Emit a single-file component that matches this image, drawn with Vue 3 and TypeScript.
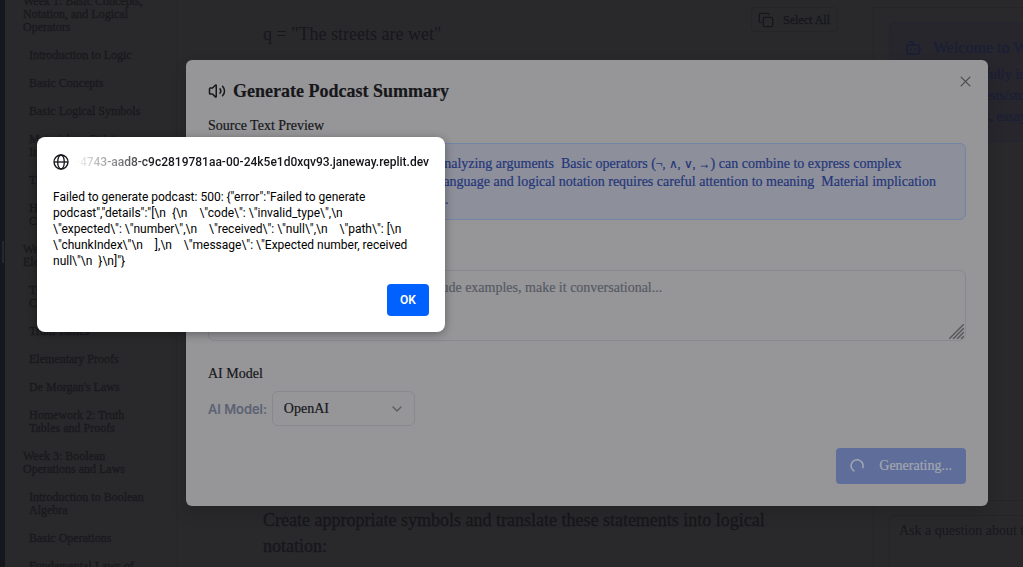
<script setup lang="ts">
import { ref } from 'vue'

interface NavEntry {
  text: string
  week?: boolean
}

const nav: NavEntry[] = [
  { text: 'Week 1: Basic Concepts,\nNotation, and Logical\nOperators', week: true },
  { text: 'Introduction to Logic' },
  { text: 'Basic Concepts' },
  { text: 'Basic Logical Symbols' },
  { text: 'Material vs. Strict\nImplication' },
  { text: 'Translation' },
  { text: 'Homework 1:\nConcepts' },
  { text: 'Week 2:\nElementary Proofs', week: true },
  { text: 'Truth-Functional\nConnectives' },
  { text: 'Truth Tables' },
  { text: 'Elementary Proofs' },
  { text: "De Morgan's Laws" },
  { text: 'Homework 2: Truth\nTables and Proofs' },
  { text: 'Week 3: Boolean\nOperations and Laws', week: true },
  { text: 'Introduction to Boolean\nAlgebra' },
  { text: 'Basic Operations' },
  { text: 'Fundamental Laws of\nBoolean Algebra' },
]

const model = ref('OpenAI')
const instructions = ref('')
const question = ref('')

const previewStart = 'Logic provides useful formal tools for analyzing arguments  Basic operators ('
const previewEnd =
  ') can combine to express complex\n' +
  'ideas  Translating between any natural language and logical notation requires careful attention to meaning  Material implication\n' +
  'differs from strict implication in models.'

const errorText =
  'Failed to generate podcast: 500: {"error":"Failed to generate\n' +
  'podcast","details":"[\\n  {\\n    \\"code\\": \\"invalid_type\\",\\n\n' +
  '\\"expected\\": \\"number\\",\\n    \\"received\\": \\"null\\",\\n    \\"path\\": [\\n\n' +
  '\\"chunkIndex\\"\\n    ],\\n    \\"message\\": \\"Expected number, received\n' +
  'null\\"\\n  }\\n]"}'
</script>

<template>
  <div class="page">
    <div class="workspace">
      <div class="rail"><span class="grip"></span></div>
      <nav class="sidebar">
        <a v-for="item in nav" :key="item.text" href="#" :class="{ week: item.week }">{{ item.text }}</a>
      </nav>
      <main class="lesson">
        <div class="lesson-top">
          <p>q = "The streets are wet"</p>
          <button type="button" class="select-all">
            <svg width="16" height="16" viewBox="0 0 24 24" fill="none" stroke="currentColor" stroke-width="2" stroke-linecap="round" stroke-linejoin="round">
              <rect x="8" y="8" width="14" height="14" rx="2" />
              <path d="M4 16c-1.100 0-2-.9-2-2V4c0-1.100.9-2 2-2h10c1.100 0 2 .9 2 2" />
            </svg>
            Select All
          </button>
        </div>
        <p class="exercise">Create appropriate symbols and translate these statements into logical notation:</p>
      </main>
      <aside class="chat">
        <section class="welcome">
          <h2>
            <svg width="18" height="18" viewBox="0 0 24 24" fill="none" stroke="currentColor" stroke-width="2" stroke-linecap="round" stroke-linejoin="round">
              <path d="M12 8V4H8M2 14h2M20 14h2M15 13v2M9 13v2" />
              <rect x="4" y="8" width="16" height="12" rx="2" />
            </svg>
            Welcome to Week
          </h2>
          <p>This course is fully interactive</p>
          <p>You can take tests/study</p>
          <p>guides, quizzes, essays</p>
        </section>
        <div class="ask">
          <textarea v-model="question" aria-label="Question" placeholder="Ask a question about the"></textarea>
        </div>
      </aside>
    </div>

    <div class="overlay">
      <section class="modal" role="dialog" aria-labelledby="modal-title">
        <header>
          <svg width="18" height="18" viewBox="0 0 24 24" fill="none" stroke="currentColor" stroke-width="2" stroke-linecap="round" stroke-linejoin="round">
            <path d="M11 4.700a.7.7 0 0 0-1.200-.5L6.400 7.600A1.400 1.400 0 0 1 5.400 8H3a1 1 0 0 0-1 1v6a1 1 0 0 0 1 1h2.400a1.400 1.400 0 0 1 1 .4l3.400 3.400a.7.7 0 0 0 1.200-.5zM16 9a5 5 0 0 1 0 6M19.400 18.400a9 9 0 0 0 0-12.700" />
          </svg>
          <h1 id="modal-title">Generate Podcast Summary</h1>
          <button type="button" class="close" aria-label="Close">
            <svg width="15" height="15" viewBox="0 0 24 24" fill="none" stroke="currentColor" stroke-width="2" stroke-linecap="round">
              <path d="M19 5 5 19M5 5l14 14" />
            </svg>
          </button>
        </header>
        <h3>Source Text Preview</h3>
        <div class="preview">{{ previewStart }}<span class="operators">¬, ∧, ∨, →</span>{{ previewEnd }}</div>
        <label class="heading instructions-label" for="instructions">Custom Instructions (Optional)</label>
        <div class="area">
          <textarea id="instructions" v-model="instructions" placeholder="e.g., Focus on all the key concepts, include examples, make it conversational..."></textarea>
          <svg class="resize" width="15" height="15" viewBox="0 0 15 15" stroke="currentColor" stroke-width="1.500">
            <path d="M0 15 15 0M4 15 15 4M8 15l7-7M12 15l3-3" />
          </svg>
        </div>
        <h3>AI Model</h3>
        <div class="model-row">
          <label for="model">AI Model:</label>
          <span class="picker">
            <select id="model" v-model="model">
              <option>OpenAI</option>
              <option>Anthropic</option>
            </select>
            <svg width="16" height="16" viewBox="0 0 24 24" fill="none" stroke="currentColor" stroke-width="2" stroke-linecap="round" stroke-linejoin="round">
              <path d="m6 9 6 6 6-6" />
            </svg>
          </span>
        </div>
        <footer>
          <button type="button" class="generate" disabled>
            <svg width="14" height="14" viewBox="0 0 14 14" fill="none" stroke="currentColor" stroke-width="1.500">
              <path d="M4.500 12.200A6 6 0 1 1 12.600 9.200" />
            </svg>
            Generating...
          </button>
        </footer>
      </section>
    </div>

    <section class="alert" role="alertdialog" aria-labelledby="origin">
      <div class="origin">
        <svg width="16" height="16" viewBox="0 0 16 16" fill="none" stroke="currentColor" stroke-width="1.300">
          <circle cx="8" cy="8" r="7" />
          <ellipse cx="8" cy="8" rx="3.300" ry="7" />
          <path d="M1 8h14" />
        </svg>
        <strong id="origin">9-4743-aad8-c9c2819781aa-00-24k5e1d0xqv93.janeway.replit.dev</strong>
      </div>
      <p>{{ errorText }}</p>
      <button type="button">OK</button>
    </section>
  </div>
</template>

<style>
body {
  margin: 0;
  background: #29292b;
}
</style>

<style scoped>
* {
  box-sizing: border-box;
}
p, h1, h2, h3 {
  margin: 0;
}
button, textarea, select {
  font: inherit;
  color: inherit;
}
svg {
  flex: none;
}
.page {
  position: relative;
  height: 100vh;
  overflow: hidden;
  background: #29292b;
  color: #17171b;
  font-family: "Liberation Serif", serif;
}
.workspace {
  display: flex;
  height: 100%;
}
.rail {
  width: 5px;
  flex: none;
  display: flex;
  align-items: center;
  justify-content: center;
  padding-bottom: 64px;
  background: #16171e;
}
.grip {
  width: 2px;
  height: 22px;
  background: #26272e;
}
.sidebar {
  width: 172px;
  flex: none;
  display: flex;
  flex-direction: column;
  gap: 15px;
  margin-top: -5px;
  border-right: 1px solid #272729;
}
.sidebar a {
  flex: none;
  padding-left: 24px;
  font-size: 12px;
  line-height: 13px;
  -webkit-text-stroke: 0.3px;
  white-space: pre;
  color: #19191d;
  text-decoration: none;
}
.sidebar a.week {
  padding-left: 18px;
}
.lesson {
  flex: 1;
  display: flex;
  flex-direction: column;
  justify-content: space-between;
  padding: 7px 35px 8px 86px;
  font-size: 18px;
  line-height: 26px;
  color: #17171b;
}
.lesson-top {
  display: flex;
  justify-content: space-between;
}
.lesson-top p {
  padding-top: 14px;
}
.exercise {
  max-width: 520px;
  -webkit-text-stroke: 0.3px;
}
.select-all {
  display: flex;
  align-items: center;
  gap: 9px;
  height: 25px;
  padding: 0 7px 0 6px;
  border: 1px solid #252528;
  border-radius: 5px;
  background: none;
  font-size: 12px;
  -webkit-text-stroke: 0.3px;
}
.chat {
  width: 150px;
  flex: none;
  display: flex;
  flex-direction: column;
  justify-content: space-between;
  margin-top: 7px;
  border-left: 1px solid #252528;
  border-top: 1px solid #252528;
  overflow: hidden;
}
.welcome {
  width: 300px;
  height: 120px;
  margin: 14px 0 0 15px;
  padding: 14px;
  border: 1px solid #232530;
  border-radius: 6px;
  background: #26262c;
  color: #1a1e37;
  font-size: 14px;
  line-height: 21px;
  -webkit-text-stroke: 0.2px;
}
.welcome h2 {
  display: flex;
  gap: 11px;
  align-items: center;
  margin-bottom: 6px;
  font-size: 16px;
  font-weight: 400;
}
.ask {
  height: 67px;
  padding: 14px 0 0 15px;
  border-top: 1px solid #252528;
}
.ask textarea {
  width: 300px;
  height: 80px;
  padding: 7px 9px;
  border: 1px solid #252528;
  border-radius: 5px;
  background: none;
  font-size: 14px;
  resize: none;
}
textarea::placeholder {
  color: inherit;
  opacity: 1;
}
.overlay {
  position: absolute;
  inset: 0;
  padding: 60px 35px 60px 186px;
}
.modal {
  padding: 21px 22px 22px;
  border-radius: 6px;
  background: #969698;
  box-shadow: 0 8px 16px rgb(0 0 0 / 12%);
  font-size: 14px;
  -webkit-text-stroke: 0.2px;
}
.modal header {
  display: flex;
  align-items: center;
  gap: 7px;
  height: 20px;
}
.modal h1 {
  flex: 1;
  font-size: 18px;
  line-height: 20px;
}
.close {
  align-self: flex-start;
  padding: 0;
  margin-top: -7px;
  margin-right: -7px;
  border: 0;
  background: none;
  color: #4b4b4e;
}
.close svg {
  display: block;
}
.modal h3, .heading {
  display: block;
  margin-top: 16px;
  font-size: 14px;
  font-weight: 400;
  line-height: 18px;
}
.preview {
  height: 77px;
  margin-top: 8px;
  padding: 11px 12px 9px;
  border: 1px solid #7484a5;
  border-radius: 6px;
  background: #8d909b;
  color: #25367a;
  line-height: 18px;
  white-space: pre;
  overflow: hidden;
}
.operators {
  font-size: 12px;
}
.heading.instructions-label {
  margin-top: 24px;
}
.area {
  position: relative;
  margin-top: 8px;
}
.area textarea {
  display: block;
  width: 100%;
  height: 71px;
  padding: 8px 12px;
  border: 1px solid #88888f;
  border-radius: 6px;
  background: none;
  color: #565a65;
  line-height: 18px;
  resize: none;
}
.resize {
  position: absolute;
  right: 2px;
  bottom: 2px;
  color: #59595c;
}
.area + h3 {
  margin-top: 24px;
}
.model-row {
  display: flex;
  align-items: center;
  gap: 5px;
  margin-top: 8px;
}
.model-row label {
  font: 500 13px/18px Inter, sans-serif;
  color: #5a6173;
}
.picker {
  display: grid;
  align-items: center;
  justify-items: end;
  width: 143px;
}
.picker > * {
  grid-area: 1 / 1;
}
.picker select {
  width: 100%;
  height: 35px;
  padding: 0 11px;
  border: 1px solid #88888f;
  border-radius: 6px;
  background: none;
  appearance: none;
}
.picker svg {
  margin-right: 10px;
  color: #5b5b5e;
  pointer-events: none;
}
.modal footer {
  display: flex;
  justify-content: flex-end;
  margin-top: 22px;
}
.generate {
  display: flex;
  align-items: center;
  gap: 15px;
  height: 36px;
  padding: 0 14px;
  border: 0;
  border-radius: 4px;
  background: #5e6d99;
  color: #a3a7b2;
}
.alert {
  position: absolute;
  left: 37px;
  top: 137px;
  width: 408px;
  padding: 17px 16px 16px;
  border-radius: 8px;
  background: #fff;
  box-shadow: 0 2px 10px rgb(0 0 0 / 35%);
  color: #15141a;
  font: 12px/16px Roboto, "Open Sans", sans-serif;
}
.origin {
  display: flex;
  align-items: center;
  gap: 6px;
}
.origin strong {
  flex: 1;
  min-width: 0;
  display: flex;
  justify-content: flex-end;
  overflow: hidden;
  font-weight: 500;
  white-space: nowrap;
  mask-image: linear-gradient(to right, transparent, #000 80px);
}
.alert p {
  margin: 19px 0 15px;
  color: #000;
  white-space: pre;
}
.alert button {
  display: block;
  width: 42px;
  height: 32px;
  margin-left: auto;
  padding: 0;
  border: 0;
  border-radius: 4px;
  background: #0061fe;
  color: #fff;
  font-weight: 600;
}
</style>
